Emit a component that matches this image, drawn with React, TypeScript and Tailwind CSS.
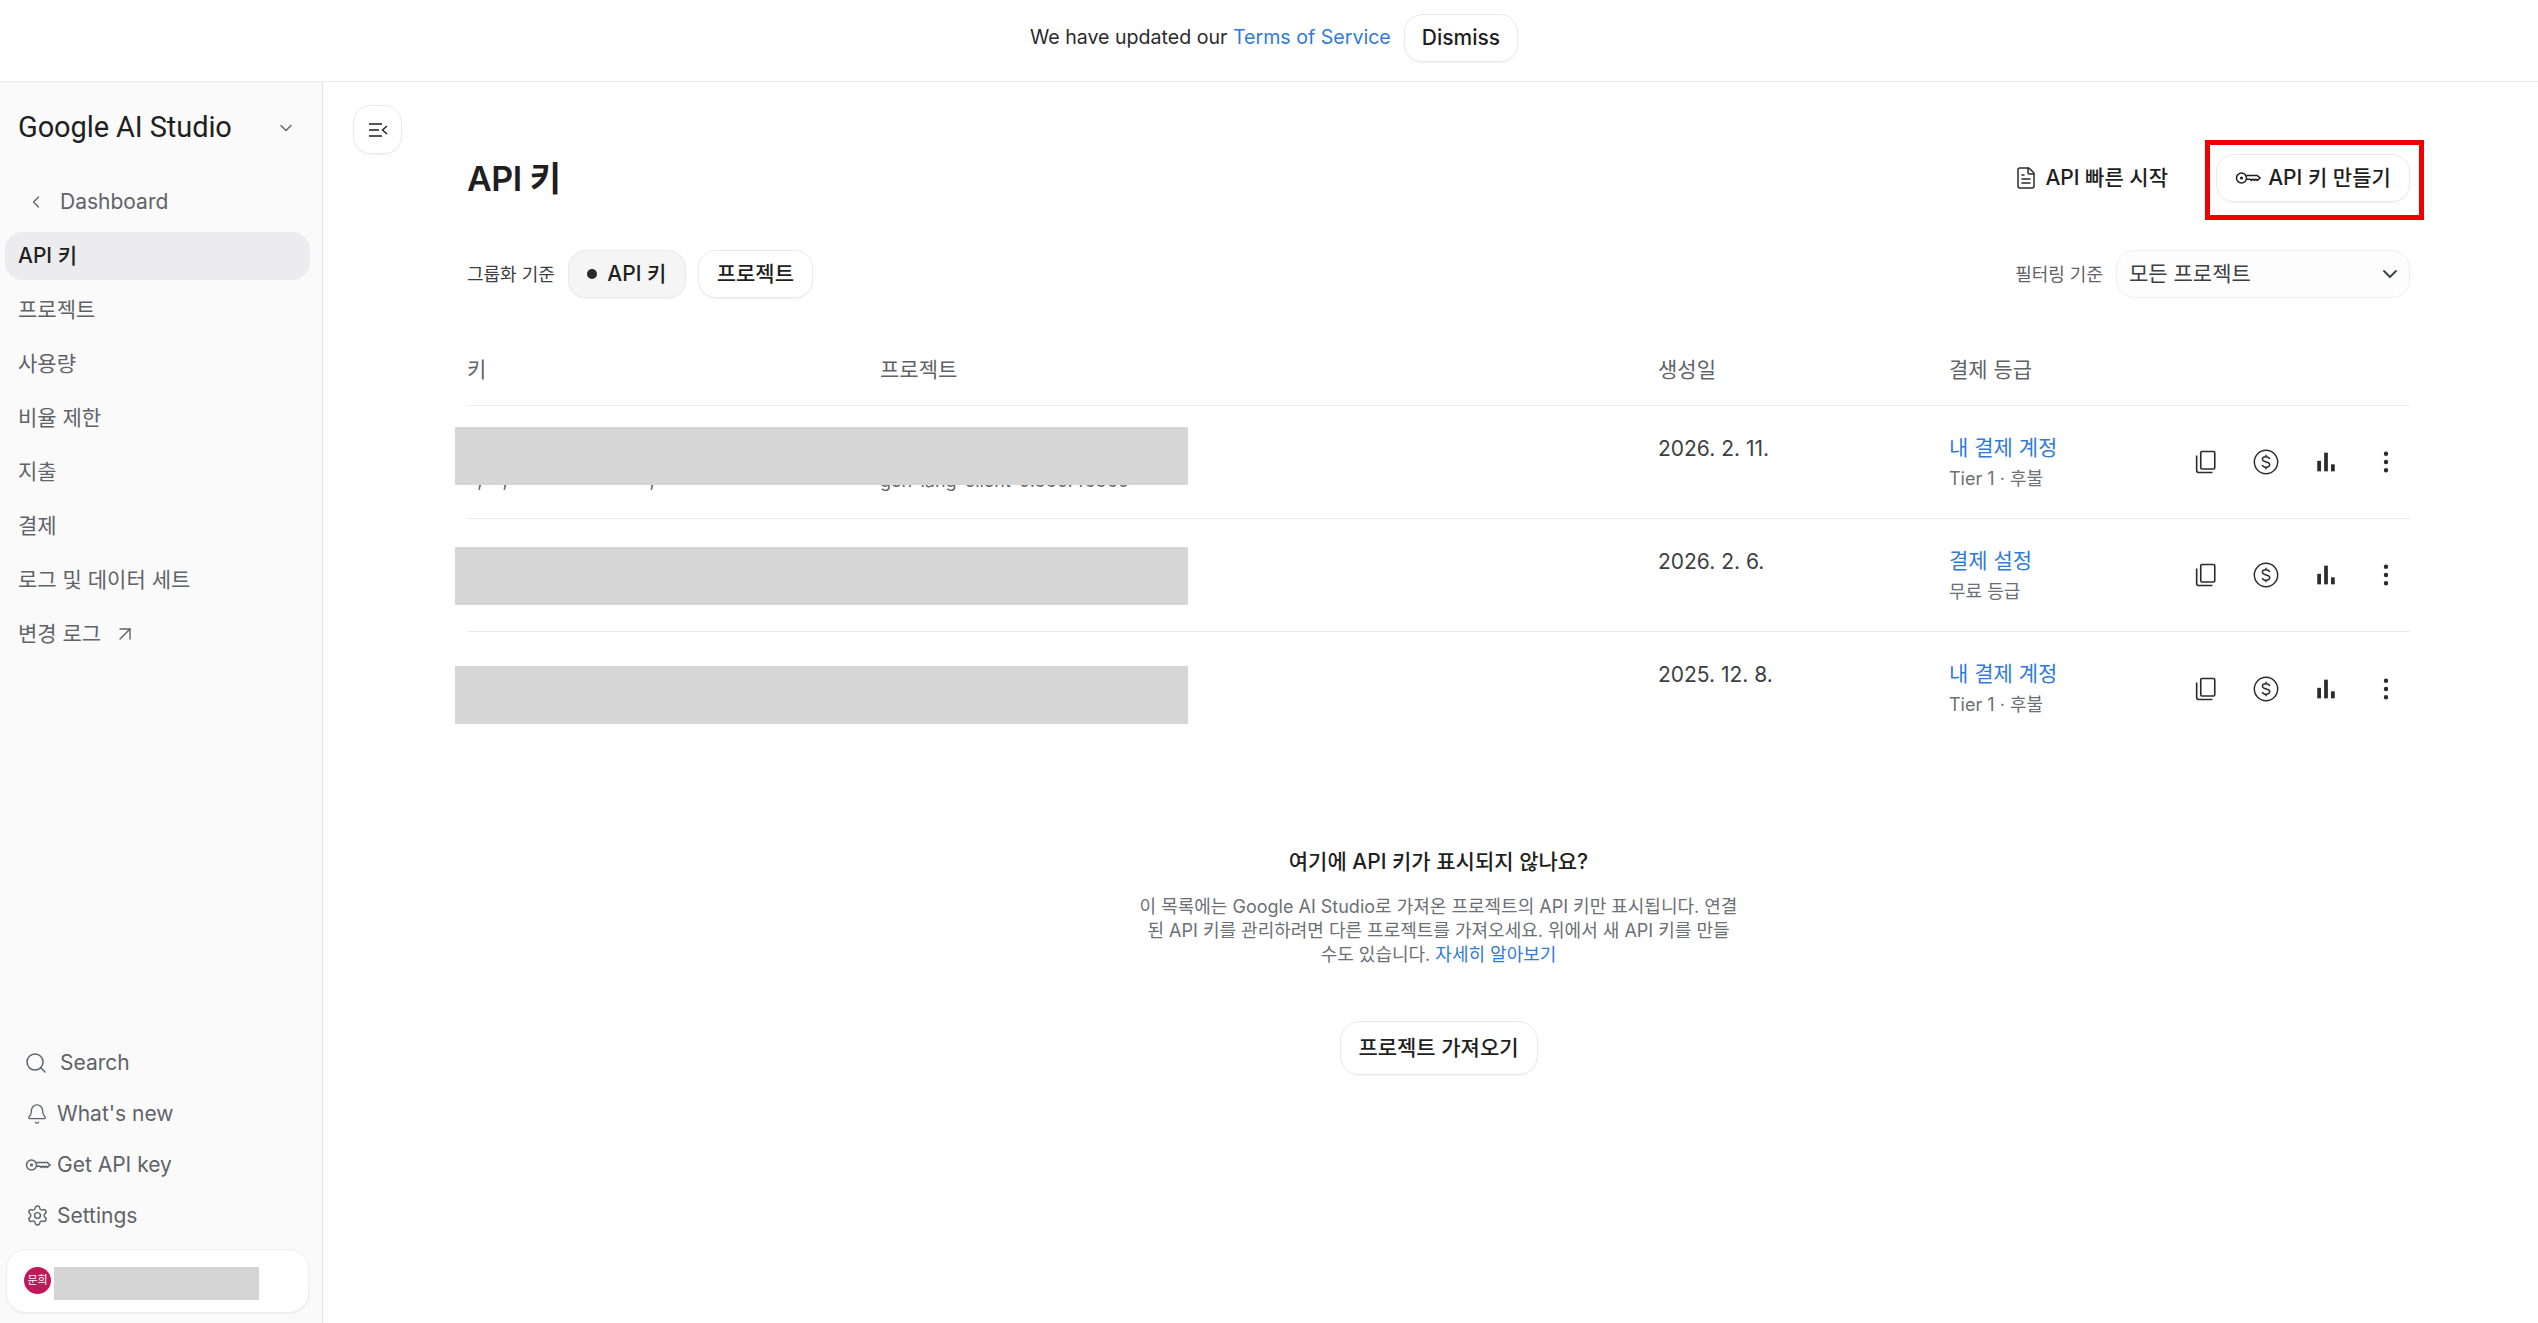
import { ArrowUpRight, Bell, ChevronDown, ChevronLeft, EllipsisVertical, FileText, Search, Settings } from "lucide-react";

const NAV_ITEMS = ["프로젝트", "사용량", "비율 제한", "지출", "결제", "로그 및 데이터 세트"];

const ROWS = [
  { date: "2026. 2. 11.", link: "내 결제 계정", tier: "Tier 1 · 후불", peek: "gen-lang-client-0.360.46360", keyPeek: "  ,    ,                            ,", mask: "top-[21px]" },
  { date: "2026. 2. 6.", link: "결제 설정", tier: "무료 등급", peek: "", keyPeek: "", mask: "top-[28px]" },
  { date: "2025. 12. 8.", link: "내 결제 계정", tier: "Tier 1 · 후불", peek: "", keyPeek: "", mask: "top-[34px]" },
];

function KeyIcon({ className }: { className?: string }) {
  return (
    <svg viewBox="0 0 26 14" fill="none" stroke="currentColor" strokeWidth="1.5" className={className}>
      <circle cx="6.5" cy="7" r="5" />
      <circle cx="6.5" cy="7" r="1.6" fill="currentColor" stroke="none" />
      <path d="M11.5 4.6h10.8l2.9 2.4-2.9 2.4-1.5-1.2-1.5 1.2-1.5-1.2-1.5 1.2-1.5-1.2h-3.2" strokeLinejoin="round" />
    </svg>
  );
}

function CopyIcon() {
  return (
    <svg viewBox="0 0 24 24" fill="none" stroke="currentColor" strokeWidth="1.4" className="h-[28px] w-[28px]">
      <rect x="7.5" y="3" width="12" height="15" rx="1" />
      <path d="M4 6.5V19a2 2 0 0 0 2 2h11.5" />
    </svg>
  );
}

function DollarIcon() {
  return (
    <svg viewBox="0 0 24 24" fill="none" stroke="currentColor" strokeWidth="1.25" className="h-[28px] w-[28px]">
      <circle cx="12" cy="12" r="10" />
      <path d="M15.2 9.4c-.5-1.2-1.7-1.9-3.2-1.9-1.8 0-3.1.9-3.1 2.2 0 3 6.3 1.5 6.3 4.5 0 1.3-1.4 2.3-3.2 2.3-1.6 0-2.8-.8-3.2-2M12 5.8v1.7M12 16.5v1.7" />
    </svg>
  );
}

function BarsIcon() {
  return (
    <svg viewBox="0 0 24 24" fill="currentColor" className="h-[28px] w-[28px]">
      <rect x="4.5" y="11" width="3.2" height="9" />
      <rect x="10.4" y="4" width="3.2" height="16" />
      <rect x="16.3" y="14" width="3.2" height="6" />
    </svg>
  );
}

function PanelIcon() {
  return (
    <svg viewBox="0 0 24 24" fill="none" stroke="currentColor" strokeWidth="1.4" className="h-[24px] w-[24px]">
      <path d="M3 6h13M3 12h10M3 18h13M21 8l-4.5 4 4.5 4" />
    </svg>
  );
}

function Pill({ children, className = "" }: { children: React.ReactNode; className?: string }) {
  return (
    <button className={`flex items-center rounded-[18px] border border-[#e9eaec] shadow-[0_1px_2px_rgba(0,0,0,0.06)] ${className}`}>
      {children}
    </button>
  );
}

function Sidebar() {
  return (
    <aside className="flex w-[323px] shrink-0 flex-col border-r border-[#e3e4e6] bg-[#fafafb]">
      <div className="flex h-[92px] items-center justify-between pl-[18px] pr-[26px]">
        <span className="[font-family:Roboto,sans-serif] text-[29px] font-normal tracking-[-0.1px] text-[#1f1f1f]">Google AI Studio</span>
        <ChevronDown className="h-[20px] w-[20px] text-[#5f6368]" strokeWidth={1.6} />
      </div>
      <div className="flex h-[56px] items-center pl-[26px] text-[21px] text-[#5f6368]">
        <ChevronLeft className="mr-[14px] h-[20px] w-[20px]" strokeWidth={1.6} />
        Dashboard
      </div>
      <div className="ml-[5px] mt-[2px] flex h-[48px] w-[305px] items-center rounded-[18px] bg-[#ececee] pl-[13px] text-[21px] font-[450] text-[#1f1f1f]">API 키</div>
      <nav className="mt-[3px] flex flex-col text-[21px] text-[#5f6368]">
        {NAV_ITEMS.map((item) => (
          <div key={item} className="flex h-[54px] items-center pl-[18px]">{item}</div>
        ))}
        <div className="flex h-[54px] items-center pl-[18px]">
          변경 로그
          <ArrowUpRight className="ml-[12px] h-[24px] w-[24px]" strokeWidth={1.4} />
        </div>
      </nav>
      <div className="mt-auto flex flex-col text-[21px] text-[#5f6368]">
        <div className="flex h-[51px] items-center pl-[24px]">
          <Search className="mr-[12px] h-[24px] w-[24px]" strokeWidth={1.5} />
          Search
        </div>
        <div className="flex h-[51px] items-center pl-[26px]">
          <Bell className="mr-[9px] h-[22px] w-[22px]" strokeWidth={1.5} />
          What's new
        </div>
        <div className="flex h-[51px] items-center pl-[25px]">
          <KeyIcon className="mr-[6px] h-[14px] w-[26px]" />
          Get API key
        </div>
        <div className="flex h-[51px] items-center pl-[26px]">
          <Settings className="mr-[8px] h-[23px] w-[23px]" strokeWidth={1.5} />
          Settings
        </div>
      </div>
      <div className="mb-[10px] ml-[6px] mt-[8px] flex h-[64px] w-[303px] items-start rounded-[20px] border border-[#eeeef0] bg-white pl-[17px] pt-[17px] shadow-[0_1px_2px_rgba(0,0,0,0.05)]">
        <div className="flex h-[27px] w-[27px] items-center justify-center rounded-full bg-[#c2185b] text-[11px] text-white">문희</div>
        <div className="ml-[3px] h-[33px] w-[205px] bg-[#d4d4d4]" />
      </div>
    </aside>
  );
}

function KeyRow({ row, last }: { row: (typeof ROWS)[number]; last: boolean }) {
  return (
    <div className={`relative grid h-[113px] grid-cols-[413px_778px_291px_1fr_260px] ${last ? "" : "border-b border-[#eaebed]"}`}>
      <div className="whitespace-pre pt-[61px] text-[18px] text-[#5f6368]">{row.keyPeek}</div>
      <div className="pt-[61px] text-[18px] text-[#5f6368]">{row.peek}</div>
      <div className="pt-[27px] text-[21px] text-[#3c4043]">{row.date}</div>
      <div className="pt-[27px]">
        <div className="text-[21px] leading-[30px] text-[#2f7bd9]">{row.link}</div>
        <div className="mt-[1px] text-[18px] leading-[30px] text-[#6b7075]">{row.tier}</div>
      </div>
      <div className="flex items-center justify-end gap-[32px] pr-[10px] text-[#2b2b2b]">
        <CopyIcon />
        <DollarIcon />
        <BarsIcon />
        <EllipsisVertical className="h-[28px] w-[28px]" strokeWidth={1.8} />
      </div>
      <div className={`absolute left-[-12px] h-[58px] w-[733px] bg-[#d6d6d6] ${row.mask}`} />
    </div>
  );
}

export default function App() {
  return (
    <div className="flex h-[1323px] w-full flex-col overflow-hidden bg-white [font-family:Inter,'Noto_Sans_CJK_KR',sans-serif] text-[#1f1f1f]">
      <header className="flex h-[82px] shrink-0 items-start justify-center gap-[13px] border-b border-[#e9eaec] pl-[10px] pt-[14px]">
        <p className="pt-[9px] text-[19.6px] text-[#2b2b2b]">
          We have updated our <a className="text-[#2f7bd9]">Terms of Service</a>
        </p>
        <Pill className="h-[48px] px-[17px] text-[21px] font-medium">Dismiss</Pill>
      </header>

      <div className="flex min-h-0 flex-1">
        <Sidebar />
        <main className="flex flex-1 pl-[30px] pr-[128px] pt-[23px]">
          <Pill className="h-[49px] w-[49px] shrink-0 justify-center rounded-[16px]">
            <PanelIcon />
          </Pill>
          <div className="ml-[65px] flex-1 pt-[49px]">
            <div className="flex h-[48px] items-center justify-between">
              <h1 className="text-[34px] font-semibold tracking-[-0.5px]">API 키</h1>
              <div className="relative flex items-center">
                <FileText className="h-[24px] w-[24px] text-[#2b2b2b]" strokeWidth={1.5} />
                <span className="ml-[7px] text-[21px] font-[450]">API 빠른 시작</span>
                <Pill className="ml-[48px] h-[48px] w-[194px] justify-center gap-[7px] text-[21px] font-[450]">
                  <KeyIcon className="h-[14px] w-[26px]" />
                  API 키 만들기
                </Pill>
                <div className="absolute right-[-14px] top-[-14px] h-[80px] w-[219px] border-[5px] border-[#f00000]" />
              </div>
            </div>

            <div className="mt-[48px] flex h-[48px] items-center justify-between">
              <div className="flex items-center">
                <span className="text-[18px] text-[#3c4043]">그룹화 기준</span>
                <Pill className="ml-[13px] h-[48px] w-[118px] justify-center gap-[10px] bg-[#f5f5f6] text-[21px] font-[450]">
                  <span className="h-[10px] w-[10px] rounded-full bg-[#2b2b2b]" />
                  API 키
                </Pill>
                <Pill className="ml-[12px] h-[48px] w-[115px] justify-center text-[21px] font-[450]">프로젝트</Pill>
              </div>
              <div className="flex items-center">
                <span className="text-[18px] text-[#5f6368]">필터링 기준</span>
                <div className="ml-[13px] flex h-[48px] w-[294px] items-center justify-between rounded-[18px] border border-[#eeeef0] bg-[#fdfdfd] pl-[12px] pr-[7px] text-[21px] text-[#3c4043]">
                  모든 프로젝트
                  <ChevronDown className="h-[24px] w-[24px]" strokeWidth={1.8} />
                </div>
              </div>
            </div>

            <div className="mt-[36px] grid h-[72px] grid-cols-[413px_778px_291px_1fr] items-center border-b border-[#eaebed] text-[21px] text-[#5f6368]">
              <span>키</span>
              <span>프로젝트</span>
              <span>생성일</span>
              <span>결제 등급</span>
            </div>
            {ROWS.map((row, i) => (
              <KeyRow key={i} row={row} last={i === ROWS.length - 1} />
            ))}

            <section className="mt-[102px] flex flex-col items-center">
              <h2 className="text-[21px] font-[450] leading-[30px]">여기에 API 키가 표시되지 않나요?</h2>
              <p className="mt-[18px] text-center text-[18px] leading-[24px] text-[#6b7075]">
                이 목록에는 Google AI Studio로 가져온 프로젝트의 API 키만 표시됩니다. 연결
                <br />
                된 API 키를 관리하려면 다른 프로젝트를 가져오세요. 위에서 새 API 키를 만들
                <br />
                수도 있습니다. <a className="text-[#2f7bd9]">자세히 알아보기</a>
              </p>
              <Pill className="mt-[54px] h-[54px] w-[198px] justify-center rounded-[20px] text-[21px] font-[450]">프로젝트 가져오기</Pill>
            </section>
          </div>
        </main>
      </div>
    </div>
  );
}
